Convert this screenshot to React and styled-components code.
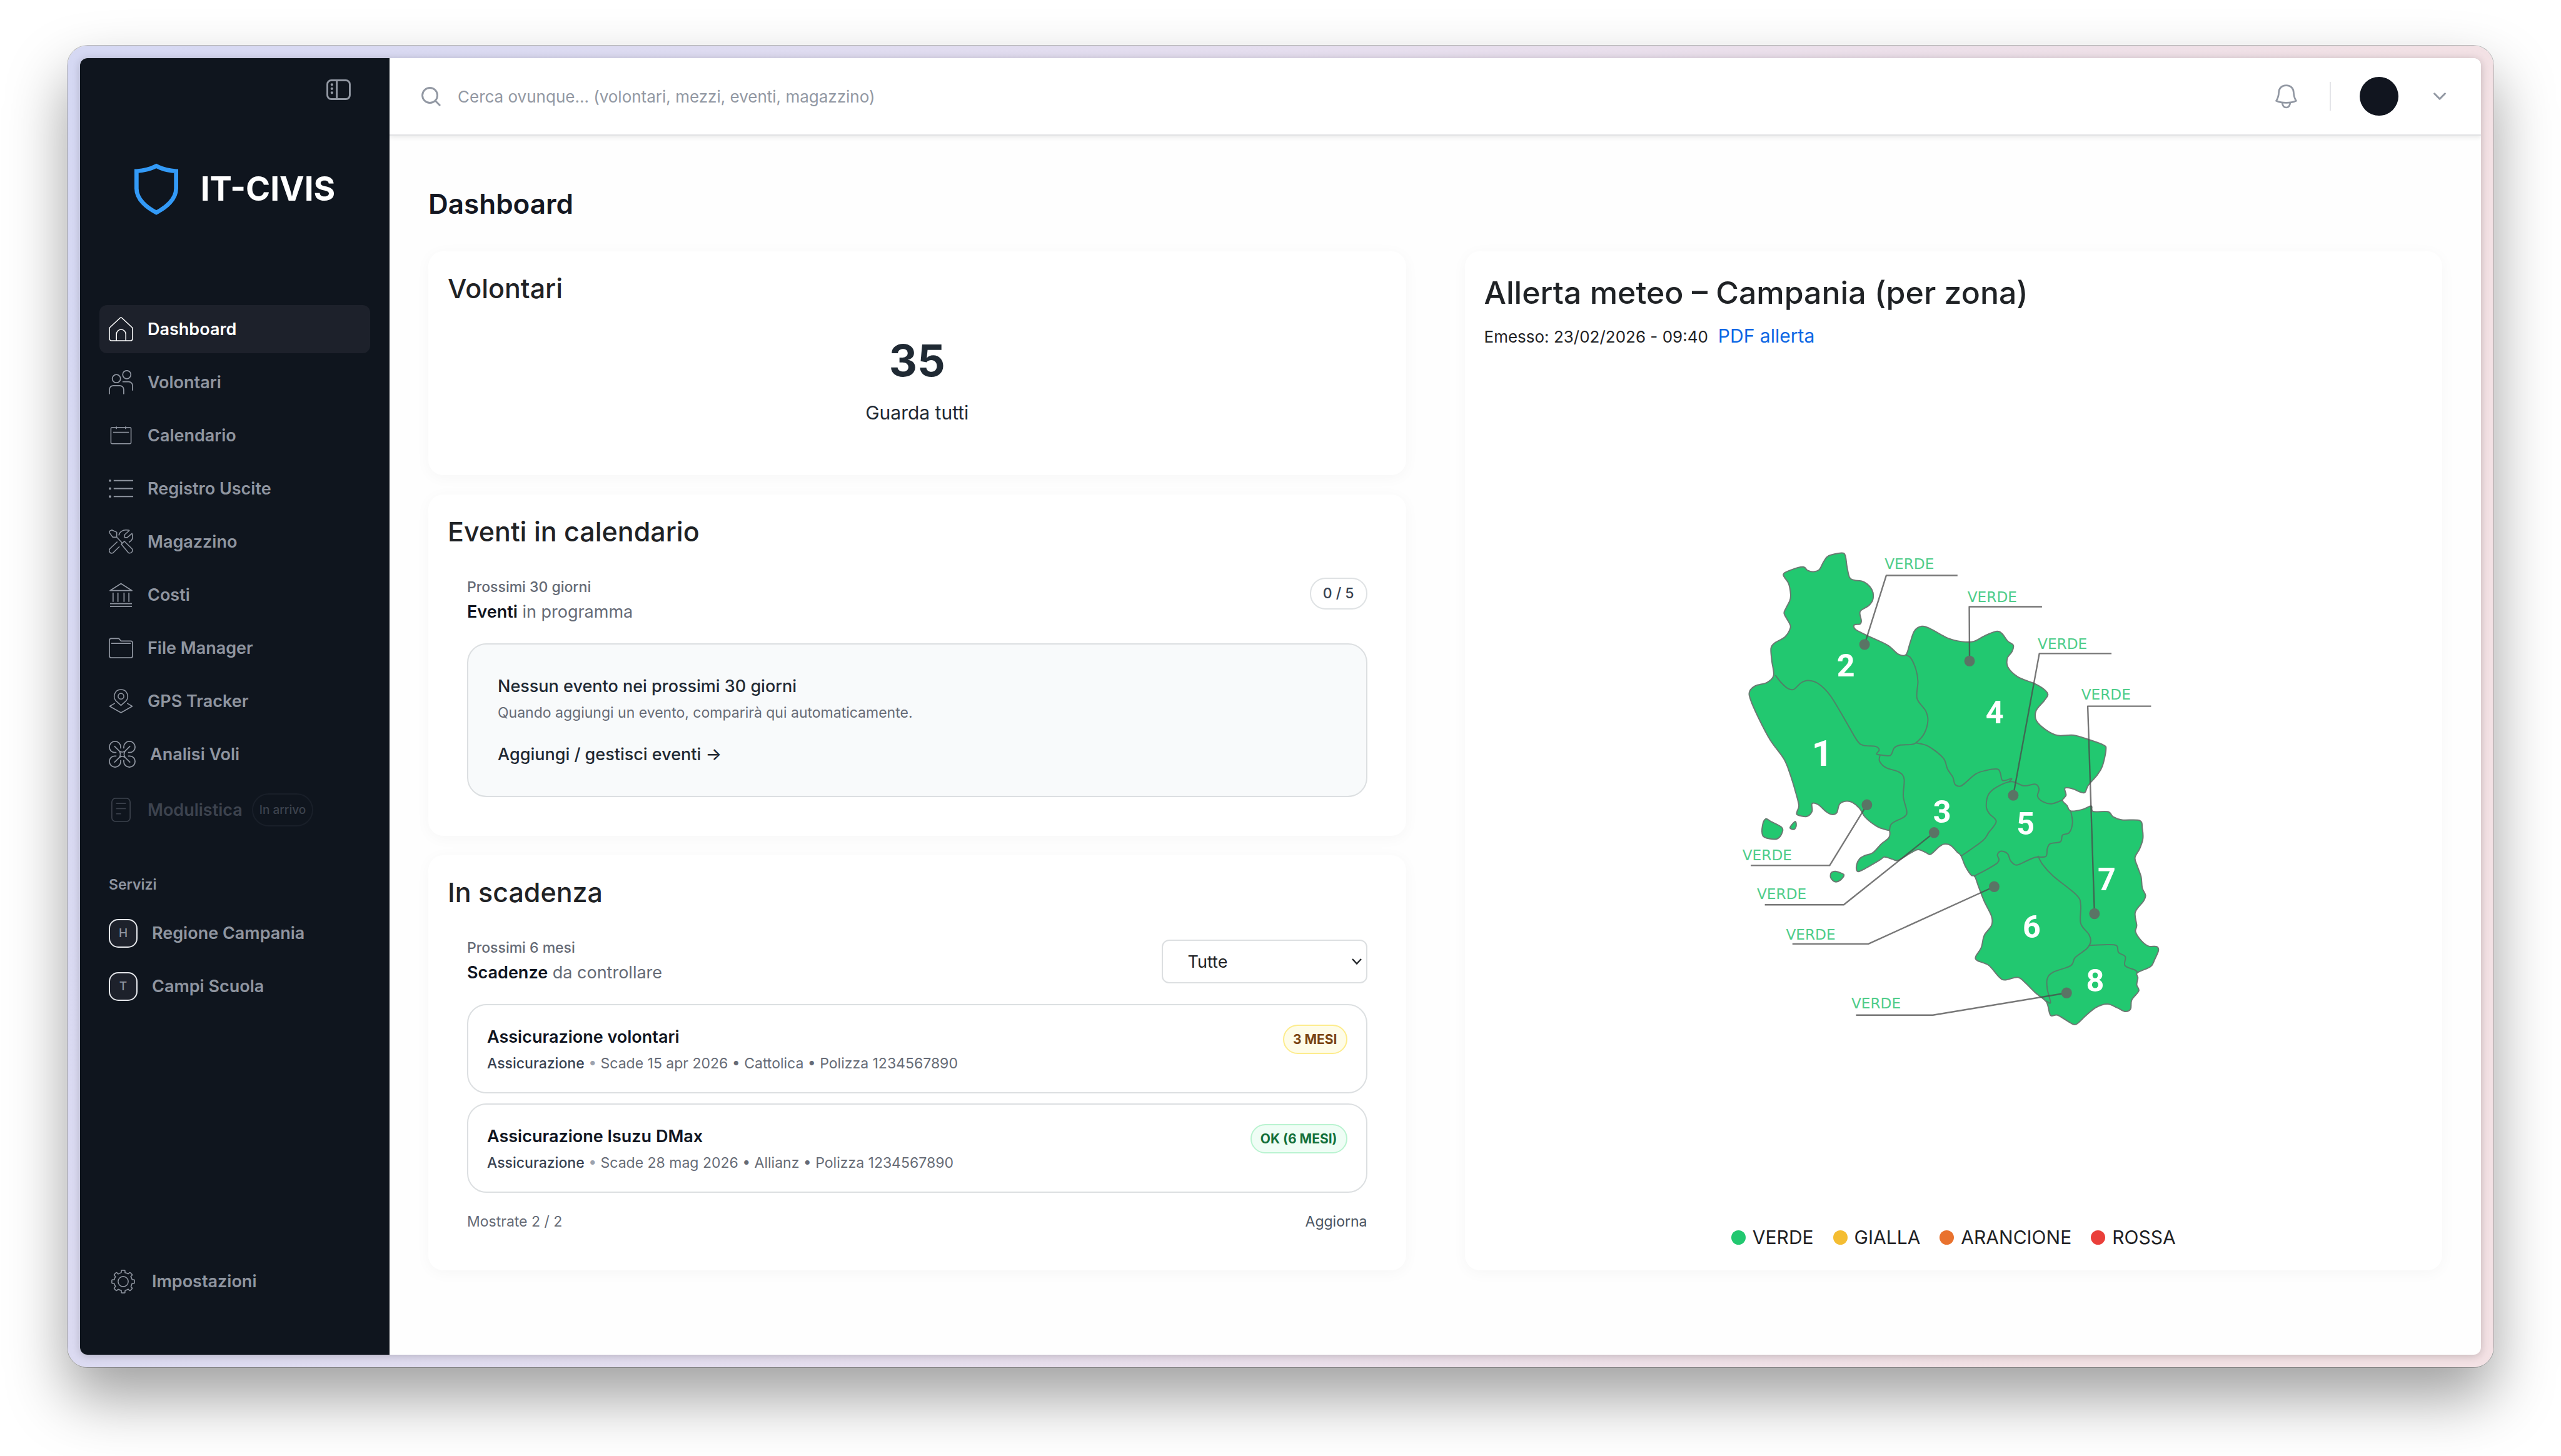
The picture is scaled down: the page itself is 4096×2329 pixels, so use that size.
import { useState } from "react";
import styled, { createGlobalStyle } from "styled-components";

const voci = [
    { nome: "Dashboard", Icona: IconaCasa },
    { nome: "Volontari", Icona: IconaPersone },
    { nome: "Calendario", Icona: IconaCalendario },
    { nome: "Registro Uscite", Icona: IconaLista },
    { nome: "Magazzino", Icona: IconaAttrezzi },
    { nome: "Costi", Icona: IconaBanca },
    { nome: "File Manager", Icona: IconaCartella },
    { nome: "GPS Tracker", Icona: IconaMappa },
    { nome: "Analisi Voli", Icona: IconaDrone },
];

const servizi = [
    { sigla: "H", nome: "Regione Campania" },
    { sigla: "T", nome: "Campi Scuola" },
];

const scadenze = [
    { titolo: "Assicurazione volontari", dettagli: "Scade 15 apr 2026 • Cattolica • Polizza 1234567890", stato: "3 MESI", tono: "giallo" },
    { titolo: "Assicurazione Isuzu DMax", dettagli: "Scade 28 mag 2026 • Allianz • Polizza 1234567890", stato: "OK (6 MESI)", tono: "verde" },
];

const livelli = [
    { nome: "VERDE", colore: "#22c870" },
    { nome: "GIALLA", colore: "#f4bd32" },
    { nome: "ARANCIONE", colore: "#e9722e" },
    { nome: "ROSSA", colore: "#ea3f3a" },
];

const toni = {
    giallo: { sfondo: "#fefce8", bordo: "#fdec8c", testo: "#7a4412" },
    verde: { sfondo: "#effdf5", bordo: "#b9f3d0", testo: "#15703a" },
};

export default function App() {
    const [attiva, setAttiva] = useState("Dashboard");
    return (
        <>
            <GlobalStyle />
            <Sfondo>
                <Cornice>
                    <Finestra>
                        <Sidebar attiva={attiva} setAttiva={setAttiva} />
                        <Pagina>
                            <Header />
                            <Dashboard />
                        </Pagina>
                    </Finestra>
                </Cornice>
            </Sfondo>
        </>
    )
}

function Sidebar(props) {
    const { attiva, setAttiva } = props
    return (
        <SidebarContainer>
            <BottoneMenu aria-label="Riduci menu"><IconaMenu /></BottoneMenu>
            <Logo>
                <IconaScudo />
                <span>IT-CIVIS</span>
            </Logo>
            <Menu>
                {voci.map(({ nome, Icona }) => (
                    <Voce key={nome} href="#" $attiva={attiva === nome} onClick={() => setAttiva(nome)}>
                        <Icona />
                        <span>{nome}</span>
                    </Voce>
                ))}
                <VoceSpenta aria-disabled="true">
                    <IconaModulo />
                    <span>Modulistica</span>
                    <InArrivo>In arrivo</InArrivo>
                </VoceSpenta>
            </Menu>
            <TitoloServizi>Servizi</TitoloServizi>
            <Menu>
                {servizi.map(({ sigla, nome }) => (
                    <Voce key={nome} href="#">
                        <Sigla>{sigla}</Sigla>
                        <span>{nome}</span>
                    </Voce>
                ))}
            </Menu>
            <Fondo>
                <Voce href="#">
                    <IconaIngranaggio />
                    <span>Impostazioni</span>
                </Voce>
            </Fondo>
        </SidebarContainer>
    )
}

function Header() {
    const [ricerca, setRicerca] = useState("");
    return (
        <HeaderContainer>
            <Ricerca>
                <svg width="31" height="31" viewBox="0 0 32 32" fill="none" stroke="#9298a3" strokeWidth="3" aria-hidden="true">
                    <circle cx="14" cy="14" r="12.4" />
                    <path d="M23 23l8 8" />
                </svg>
                <InputRicerca type="text" aria-label="Cerca" placeholder="Cerca ovunque… (volontari, mezzi, eventi, magazzino)"
                    value={ricerca} onChange={e => setRicerca(e.target.value)} />
            </Ricerca>
            <BottoneIcona aria-label="Notifiche">
                <svg width="35" height="39" viewBox="0 0 36 40" fill="none" stroke="#9298a3" strokeWidth="2.8" strokeLinejoin="round" aria-hidden="true">
                    <path d="M18 1.6C10 1.6 6 7 5.8 13c-.2 6-1 9-4.2 14 5 2.4 10.6 3.2 16.4 3.2S29.4 29.4 34.4 27c-3.2-5-4-8-4.200-14C30 7 26 1.600 18 1.600z" />
                    <path d="M11.500 30.500c.5 4.500 3 7.500 6.500 7.500s6-3 6.500-7.500" />
                </svg>
            </BottoneIcona>
            <Divisore />
            <Profilo aria-label="Profilo">
                <Avatar />
                <svg width="20" height="12" viewBox="0 0 20 12" fill="none" stroke="#9298a3" strokeWidth="3" strokeLinecap="round" strokeLinejoin="round" aria-hidden="true">
                    <path d="M1.600 1.800L10 10.200l8.400-8.400" />
                </svg>
            </Profilo>
        </HeaderContainer>
    )
}

function Dashboard() {
    return (
        <Contenuto>
            <TitoloPagina>Dashboard</TitoloPagina>
            <Griglia>
                <Colonna>
                    <CartaVolontari />
                    <CartaEventi />
                    <CartaScadenze />
                </Colonna>
                <CartaAllerta />
            </Griglia>
        </Contenuto>
    )
}

function CartaVolontari() {
    return (
        <Carta>
            <TitoloCarta>Volontari</TitoloCarta>
            <Riepilogo>
                <Numero>35</Numero>
                <LinkTutti href="#">Guarda tutti</LinkTutti>
            </Riepilogo>
        </Carta>
    )
}

function CartaEventi() {
    return (
        <Carta>
            <TitoloCarta>Eventi in calendario</TitoloCarta>
            <Corpo>
                <Testata>
                    <Intro>
                        <Periodo>Prossimi 30 giorni</Periodo>
                        <Sottotitolo><b>Eventi</b> in programma</Sottotitolo>
                    </Intro>
                    <Contatore>0 / 5</Contatore>
                </Testata>
                <Vuoto>
                    <strong>Nessun evento nei prossimi 30 giorni</strong>
                    <Piccolo>Quando aggiungi un evento, comparirà qui automaticamente.</Piccolo>
                    <LinkEventi href="#">Aggiungi / gestisci eventi →</LinkEventi>
                </Vuoto>
            </Corpo>
        </Carta>
    )
}

function CartaScadenze() {
    const [filtro, setFiltro] = useState("Tutte");
    return (
        <Carta>
            <TitoloCarta>In scadenza</TitoloCarta>
            <Corpo>
                <Testata $centrata>
                    <Intro>
                        <Periodo>Prossimi 6 mesi</Periodo>
                        <Sottotitolo><b>Scadenze</b> da controllare</Sottotitolo>
                    </Intro>
                    <Filtro>
                        <select aria-label="Filtro scadenze" value={filtro} onChange={e => setFiltro(e.target.value)}>
                            <option>Tutte</option>
                            <option>Assicurazione</option>
                            <option>Revisione</option>
                        </select>
                        <svg width="16" height="10" viewBox="0 0 16 10" fill="none" stroke="#222529" strokeWidth="2.4" aria-hidden="true">
                            <path d="M1 1l7 7.500L15 1" />
                        </svg>
                    </Filtro>
                </Testata>
                <Elenco>
                    {scadenze.map(s => (
                        <Scadenza key={s.titolo}>
                            <div>
                                <h3>{s.titolo}</h3>
                                <Piccolo><b>Assicurazione</b> <i>•</i> {s.dettagli}</Piccolo>
                            </div>
                            <Stato $tono={toni[s.tono]}>{s.stato}</Stato>
                        </Scadenza>
                    ))}
                </Elenco>
                <Piede>
                    <Piccolo>Mostrate 2 / 2</Piccolo>
                    <Aggiorna>Aggiorna</Aggiorna>
                </Piede>
            </Corpo>
        </Carta>
    )
}

function CartaAllerta() {
    return (
        <Carta>
            <TitoloAllerta>Allerta meteo – Campania (per zona)</TitoloAllerta>
            <Emissione>
                <span>Emesso: 23/02/2026 - 09:40</span>
                <a href="#">PDF allerta</a>
            </Emissione>
            <AreaMappa>
                <Mappa />
            </AreaMappa>
            <Legenda>
                {livelli.map(({ nome, colore }) => (
                    <li key={nome}><Pallino $colore={colore} />{nome}</li>
                ))}
            </Legenda>
        </Carta>
    )
}

/* ---------- mappa ---------- */

const costa = "220,210 245,188 287,172 303,190 323,196 343,185 358,145 375,117 418,103 431,115 437,170 446,225 462,238 495,247 522,285 526,330 513,362 485,388 481,405 486,440 481,456 462,460 466,482 505,512 575,560 612,605 638,608 652,550 667,490 692,467 720,478 780,525 830,543 870,542 905,515 945,492 965,502 985,540 1004,560 1000,592 984,625 986,670 1020,718 1075,750 1108,778 1122,805 1110,835 1082,885 1083,935 1115,980 1155,1008 1210,1007 1260,1028 1312,1056 1320,1080 1308,1160 1290,1205 1260,1255 1249,1290 1235,1290 1205,1272 1180,1270 1184,1305 1172,1330 1187,1355 1200,1383 1240,1375 1270,1358 1276,1385 1327,1386 1345,1412 1375,1427 1435,1430 1444,1470 1446,1520 1435,1570 1419,1615 1428,1660 1440,1710 1444,1765 1455,1800 1448,1830 1420,1885 1425,1950 1421,1982 1440,2025 1465,2053 1493,2055 1499,2075 1486,2120 1472,2155 1427,2185 1429,2210 1425,2245 1432,2275 1408,2320 1404,2365 1385,2377 1360,2360 1325,2340 1285,2358 1250,2400 1218,2441 1195,2430 1155,2395 1131,2396 1117,2330 1080,2285 1045,2235 1020,2208 975,2221 955,2205 920,2148 882,2125 876,2105 895,2060 905,2000 930,1950 930,1905 905,1830 885,1755 873,1708 860,1700 840,1655 826,1605 812,1585 790,1553 768,1547 750,1562 722,1598 705,1588 680,1574 655,1590 612,1627 592,1622 565,1611 550,1625 490,1675 472,1681 470,1650 480,1620 497,1604 525,1590 555,1545 580,1515 582,1480 573,1477 540,1460 500,1415 480,1370 455,1340 435,1334 412,1348 402,1392 385,1400 365,1385 340,1352 318,1346 318,1385 300,1410 268,1402 267,1385 273,1355 262,1290 243,1200 222,1125 175,1030 135,920 108,830 105,790 125,762 165,745 187,710 181,640 178,575 192,548 225,520 244,475 240,450 223,405 228,380 242,340 245,310 238,255";

const isole = [
    "160,1422 178,1435 214,1463 216,1490 200,1520 175,1521 150,1505 149,1455",
    "260,1435 264,1455 257,1474 243,1465",
    "397,1682 412,1688 427,1700 415,1725 397,1734 382,1715 383,1690",
];

const confini = [
    "193,710 212,745 235,775 255,780 280,748 305,736 340,752 380,810 430,930 470,1030 492,1057 535,1063 547,1080 538,1100 555,1105 585,1107 598,1070 615,1057 655,1053 672,1045 700,1000 713,935 705,885 676,825 679,740 672,680 655,625 638,608",
    "550,1105 548,1135 570,1168 615,1190 632,1225 629,1310 641,1385 632,1412 590,1445 582,1480",
    "672,1045 715,1062 765,1120 780,1175 798,1215 805,1250 820,1260 835,1250 875,1200 910,1182 950,1175 960,1195 968,1232 998,1222 990,1238",
    "1172,1328 1135,1347 1105,1337 1087,1310 1092,1275 1080,1250 1040,1258 998,1237 950,1262 920,1300 912,1360 922,1395 946,1435 920,1490 900,1530 826,1607",
    "1200,1383 1206,1440 1195,1490 1172,1502 1165,1535 1130,1545 1120,1570 1115,1608 1080,1612 1050,1630 1015,1651 995,1630 985,1595 963,1582 950,1600 950,1640 870,1707",
    "1088,1605 1105,1650 1140,1705 1220,1800 1234,1850 1234,1940 1262,1995 1268,2030 1255,2065 1215,2110 1200,2150 1140,2182 1120,2215 1120,2265 1131,2333 1117,2325",
    "1263,2049 1310,2046 1355,2049 1363,2085 1386,2105 1385,2150 1420,2172 1427,2185",
];

const richiami = [
    { punto: [497, 557], gomito: [571, 215], fine: 814, x: 274, y: 61 },
    { punto: [855, 639], gomito: [854, 370], fine: 1102, x: 411, y: 116 },
    { punto: [1004, 1305], gomito: [1093, 602], fine: 1339, x: 527, y: 193 },
    { punto: [1281, 1892], gomito: [1258, 863], fine: 1474, x: 599, y: 277 },
    { punto: [505, 1352], gomito: [378, 1653], fine: 109, x: 39, y: 542 },
    { punto: [734, 1490], gomito: [426, 1848], fine: 157, x: 63, y: 606 },
    { punto: [939, 1758], gomito: [510, 2042], fine: 251, x: 111, y: 674 },
    { punto: [1186, 2285], gomito: [730, 2395], fine: 468, x: 219, y: 787 },
];

const zone = [
    { n: 1, x: 171, y: 386, corpo: 60 },
    { n: 2, x: 210, y: 238, corpo: 52 },
    { n: 3, x: 369, y: 480, corpo: 52 },
    { n: 4, x: 456, y: 316, corpo: 52 },
    { n: 5, x: 507, y: 500, corpo: 52 },
    { n: 6, x: 517, y: 670, corpo: 52 },
    { n: 7, x: 641, y: 592, corpo: 52 },
    { n: 8, x: 622, y: 759, corpo: 52 },
];

// curva morbida che passa per tutti i punti (Catmull-Rom)
function curva(testo, chiusa) {
    const p = testo.split(" ").map(c => c.split(",").map(Number));
    const n = p.length;
    const prendi = i => chiusa ? p[(i + n) % n] : p[Math.max(0, Math.min(n - 1, i))];
    let d = `M${p[0][0]} ${p[0][1]}`;
    for (let i = 0; i < (chiusa ? n : n - 1); i++) {
        const [a, b, c, e] = [prendi(i - 1), prendi(i), prendi(i + 1), prendi(i + 2)];
        d += `C${b[0] + (c[0] - a[0]) / 6} ${b[1] + (c[1] - a[1]) / 6} ${c[0] - (e[0] - b[0]) / 6} ${c[1] - (e[1] - b[1]) / 6} ${c[0]} ${c[1]}`;
    }
    return chiusa ? d + "Z" : d;
}

function Mappa() {
    return (
        <svg width="750" height="794" viewBox="0 0 775 820" role="img" aria-label="Zone di allerta della Campania">
            <g transform="scale(.4847 .3333)" stroke="#6a7a72" strokeWidth="2" strokeLinejoin="round">
                <path d={curva(costa, true)} fill="#22c870" vectorEffect="non-scaling-stroke" />
                {isole.map(i => <path key={i} d={curva(i, true)} fill="#22c870" vectorEffect="non-scaling-stroke" />)}
                {confini.map(c => <path key={c} d={curva(c, false)} fill="none" stroke="#4f8268" vectorEffect="non-scaling-stroke" />)}
                {richiami.map(({ punto, gomito, fine }) => (
                    <g key={fine}>
                        <path d={`M${punto} L${gomito} H${fine}`} fill="none" stroke="#4a4a4a" strokeOpacity=".75" strokeWidth="2.4" vectorEffect="non-scaling-stroke" />
                        <ellipse cx={punto[0]} cy={punto[1]} rx="18" ry="27" fill="#5a7465" stroke="none" />
                    </g>
                ))}
            </g>
            {richiami.map(({ x, y }) => <Etichetta key={y} x={x} y={y}>VERDE</Etichetta>)}
            {zone.map(({ n, x, y, corpo }) => <NumeroZona key={n} x={x} y={y} fontSize={corpo}>{n}</NumeroZona>)}
        </svg>
    )
}

/* ---------- icone ---------- */

function Tratto({ lato = 39, box = 40, spessore = 1.6, children }) {
    return (
        <svg width={lato} height={lato} viewBox={`0 0 ${box} ${box}`} fill="none" stroke="currentColor" strokeWidth={spessore} strokeLinejoin="round" aria-hidden="true">
            {children}
        </svg>
    )
}

function IconaCasa() {
    return (
        <Tratto>
            <path d="M1 35V18L18.300 1.800q1.700-1.500 3.400 0L39 18v17q0 4-4 4H5q-4 0-4-4z" />
            <path d="M12.500 39V28.500a7.700 8 0 0 1 15.400 0V39" />
        </Tratto>
    )
}

function IconaPersone() {
    return (
        <Tratto spessore={1.8}>
            <circle cx="29.500" cy="7.500" r="6.700" />
            <circle cx="12.500" cy="14" r="6.700" />
            <path d="M1 39.500V32a6.500 6.500 0 0 1 6.500-6.500h10.500a6.500 6.500 0 0 1 6.500 6.500v7.500M22.500 19h10a6.500 6.500 0 0 1 6.500 6.500v8" />
        </Tratto>
    )
}

function IconaCalendario() {
    return (
        <Tratto>
            <rect x="3.500" y="7" width="33" height="26.500" rx="2" />
            <path d="M7 14.800h26M12.500 5.500v4M27.500 5.500v4" />
        </Tratto>
    )
}

function IconaLista() {
    return (
        <Tratto spessore={2}>
            <path d="M8 7h32M8 20h32M8 33h32" />
            <g fill="currentColor" stroke="none">
                <circle cx="2" cy="7" r="2" />
                <circle cx="2" cy="20" r="2" />
                <circle cx="2" cy="33" r="2" />
            </g>
        </Tratto>
    )
}

function IconaAttrezzi() {
    return (
        <Tratto>
            <path d="M1.500 2.500L5 .8 13 4.500v8H6.500L.8 5zM13 12.500l9 9.500" />
            <path d="M20.500 24.200L25.500 19.200 38 31.500c3 4-2 9-6 6.500z" />
            <path d="M16.500 9.500C17.500 3.500 23 .8 28 .8c3 0 6 .2 5.500 1L26 8.500v4.500h4.500L38 6.500c2 5 1.500 11-5 14.500" />
            <path d="M14 20L1.800 31.500c-3 4 1 9.500 5.500 6.500L17.500 28" />
        </Tratto>
    )
}

function IconaBanca() {
    return (
        <Tratto spessore={1.8}>
            <path d="M20 1.500L2 13h36zM7 16.500v15M15 16.500v15M25 16.500v15M33 16.500v15M2 34.500h36M2 39h36" />
        </Tratto>
    )
}

function IconaCartella() {
    return (
        <Tratto spessore={1.8}>
            <path d="M4 4.500h12.500l3.500 4h16q3 0 3 3V33q0 3-3 3H4q-3 0-3-3V7.500q0-3 3-3zM4 12.500h32" />
        </Tratto>
    )
}

function IconaMappa() {
    return (
        <Tratto>
            <path d="M20 27l-8.200-7.300C6 13 9.500 1 20 1s14 12 8.200 18.700z" />
            <circle cx="20" cy="12" r="4.700" />
            <path d="M10 23.500L1.500 28.500 20 39l18.500-10.500-8.500-5" />
        </Tratto>
    )
}

function IconaDrone() {
    const braccio = "M19.500 12.500V10A9 9 0 0 0 10.500 1H10A9 9 0 0 0 1 10v.5A8.500 8.500 0 0 0 9.500 19H12.500M9 8.500L17 16.500q2.500 2 5 2M17 16.500q2 3 2 5.500";
    return (
        <Tratto lato={43} box={44} spessore={1.8}>
            <path d={braccio} />
            <path d={braccio} transform="translate(44 0) scale(-1 1)" />
            <path d={braccio} transform="translate(0 44) scale(1 -1)" />
            <path d={braccio} transform="translate(44 44) scale(-1 -1)" />
        </Tratto>
    )
}

function IconaModulo() {
    return (
        <Tratto>
            <rect x="5" y="1" width="30" height="38" rx="6" />
            <path d="M12 9.500h16M12 18h16M12 26.500h8" />
        </Tratto>
    )
}

function IconaIngranaggio() {
    const dente = "M17 5.500V2.500q0-1 1-1h4q1 0 1 1v3q3 .6 5.200 2";
    return (
        <Tratto lato={46} box={47}>
            <g transform="translate(3.500 3.500)">
                {[0, 45, 90, 135, 180, 225, 270, 315].map(a => <path key={a} d={dente} transform={`rotate(${a} 20 20)`} />)}
                <circle cx="20" cy="20" r="8.300" />
            </g>
        </Tratto>
    )
}

function IconaMenu() {
    return (
        <svg width="39" height="33" viewBox="0 0 40 34" fill="none" stroke="#9298a3" strokeWidth="3" aria-hidden="true">
            <rect x="1.500" y="1.500" width="37" height="31" rx="6.500" />
            <path d="M17 2v30" />
            <path d="M9 8.600h.1M9 15.300h.1M9 22h.1" strokeWidth="4.400" strokeLinecap="round" />
        </svg>
    )
}

function IconaScudo() {
    return (
        <svg width="70" height="83" viewBox="0 0 73 86" fill="none" stroke="#339af7" strokeWidth="7" aria-hidden="true">
            <path d="M36.500 4.500Q22 12 3.500 13v29c0 18 17 32 33 40 16-8 33-22 33-40V13Q51 12 36.500 4.500z" />
        </svg>
    )
}

/* ---------- stili ---------- */

const GlobalStyle = createGlobalStyle`
* {
    box-sizing: border-box;
}
body {
    margin: 0;
    background: #ffffff;
    color: #1f2225;
    font-family: 'Inter', 'Liberation Sans', sans-serif;
    font-size: 27px;
    line-height: 39px;
}
h1, h2, h3, p, ul {
    margin: 0;
    padding: 0;
}
a {
    color: inherit;
    text-decoration: none;
}
button, input, select {
    font: inherit;
    color: inherit;
    background: none;
    border: none;
    padding: 0;
}
svg {
    display: block;
    flex: none;
}
`
const Sfondo = styled.div`
display: flex;
min-height: 100vh;
padding: 73px 108px 143px;
`
const Cornice = styled.div`
flex: 1;
display: flex;
padding: 20px;
border-radius: 32px;
background: linear-gradient(110deg, #d5d8f3, #e6deee 45%, #f3e1e4 85%);
box-shadow: 0 0 0 1px rgba(0, 0, 0, 0.25), 0 48px 96px rgba(0, 0, 0, 0.38);
`
const Finestra = styled.div`
flex: 1;
display: flex;
border-radius: 12px;
overflow: hidden;
background: #fefefe;
box-shadow: 0 2px 14px rgba(0, 0, 0, 0.2);
`
const SidebarContainer = styled.aside`
width: 495px;
flex: none;
display: flex;
flex-direction: column;
padding: 34px 31px 79px;
background: #0f151e;
color: #8f95a0;
`
const BottoneMenu = styled.button`
align-self: flex-end;
margin-right: 31px;
`
const Logo = styled.div`
display: flex;
align-items: center;
justify-content: center;
gap: 36px;
margin: 101px 0 144px;
color: #ffffff;
font-size: 53px;
line-height: 83px;
font-weight: 700;
`
const Menu = styled.nav`
display: flex;
flex-direction: column;
gap: 8px;
`
const Voce = styled.a`
display: flex;
align-items: center;
gap: 23px;
min-height: 77px;
padding: 0 15px;
border-radius: 12px;
font-weight: 600;
color: ${props => props.$attiva ? "#ffffff" : "inherit"};
background: ${props => props.$attiva ? "#1d212b" : "none"};
`
const VoceSpenta = styled(Voce).attrs({ as: "div" })`
min-height: 85px;
color: #3d434e;
`
const InArrivo = styled.span`
margin-left: -8px;
padding: 5px 10px;
border: 2px solid #191f29;
border-radius: 27px;
font-size: 19px;
font-weight: 500;
`
const TitoloServizi = styled.h2`
margin: 62px 15px 23px;
font-size: 23px;
line-height: 31px;
font-weight: 600;
`
const Sigla = styled.span`
width: 46px;
height: 46px;
display: grid;
place-items: center;
border: 2px solid #e5e7eb;
border-radius: 15px;
background: #1d212b;
font-size: 19px;
font-weight: 500;
`
const Fondo = styled.div`
margin-top: auto;
`
const Pagina = styled.div`
flex: 1;
min-width: 0;
display: flex;
flex-direction: column;
`
const HeaderContainer = styled.header`
height: 124px;
display: flex;
align-items: center;
padding: 0 56px 0 51px;
background: #ffffff;
border-bottom: 2px solid #e1e2e4;
box-shadow: 0 3px 7px rgba(0, 0, 0, 0.08);
`
const Ricerca = styled.label`
flex: 1;
display: flex;
align-items: center;
gap: 27px;
`
const InputRicerca = styled.input`
flex: 1;
outline: none;
font-size: 26px;
&::placeholder {
    color: #9298a3;
    opacity: 1;
}
`
const BottoneIcona = styled.button`
display: flex;
`
const Divisore = styled.div`
width: 2px;
height: 46px;
margin: 0 46px 0 52px;
background: #e4e5e8;
`
const Profilo = styled.button`
display: flex;
align-items: center;
gap: 56px;
`
const Avatar = styled.span`
width: 62px;
height: 62px;
border-radius: 50%;
background: #11151f;
`
const Contenuto = styled.main`
flex: 1;
padding: 78px 62px 135px;
display: flex;
flex-direction: column;
`
const TitoloPagina = styled.h1`
margin-bottom: 45px;
color: #141722;
font-size: 44px;
line-height: 62px;
font-weight: 600;
`
const Griglia = styled.div`
flex: 1;
display: grid;
grid-template-columns: 1fr 1fr;
gap: 94px;
`
const Colonna = styled.div`
display: flex;
flex-direction: column;
gap: 31px;
`
const Carta = styled.section`
display: flex;
flex-direction: column;
padding: 31px;
border-radius: 24px;
background: #ffffff;
box-shadow: 0 4px 24px rgba(0, 0, 0, 0.035);
`
const TitoloCarta = styled.h2`
margin-bottom: 15px;
font-size: 43px;
line-height: 56px;
font-weight: 500;
`
const Riepilogo = styled.div`
display: flex;
flex-direction: column;
align-items: center;
gap: 17px;
padding: 29px 0 46px;
color: #1f2933;
`
const Numero = styled.strong`
font-size: 70px;
line-height: 87px;
font-weight: 700;
`
const LinkTutti = styled.a`
font-size: 30px;
line-height: 46px;
`
const Corpo = styled.div`
display: flex;
flex-direction: column;
gap: 31px;
padding: 31px;
`
const Testata = styled.div`
display: flex;
align-items: ${props => props.$centrata ? "center" : "flex-start"};
justify-content: space-between;
`
const Intro = styled.div`
display: flex;
flex-direction: column;
gap: 4px;
`
const Piccolo = styled.p`
color: #666b76;
font-size: 23px;
line-height: 31px;
b {
    color: #374151;
    font-weight: 500;
}
i {
    color: #9ca3af;
    font-style: normal;
}
`
const Periodo = styled(Piccolo)`
font-weight: 500;
`
const Sottotitolo = styled.p`
color: #666b76;
b {
    color: #11151f;
    font-weight: 600;
}
`
const Contatore = styled.span`
padding: 8px 19px;
border: 2px solid #dfe2e4;
border-radius: 25px;
color: #374151;
font-size: 23px;
line-height: 31px;
font-weight: 500;
`
const Vuoto = styled.div`
display: flex;
flex-direction: column;
align-items: flex-start;
gap: 8px;
padding: 47px;
border: 2px solid #dcdfe1;
border-radius: 31px;
background: #f8fafb;
strong {
    color: #1f2933;
    font-weight: 500;
}
`
const LinkEventi = styled.a`
margin-top: 23px;
color: #1f2933;
font-weight: 500;
`
const Filtro = styled.div`
display: grid;
align-items: center;
select {
    grid-area: 1 / 1;
    width: 329px;
    height: 70px;
    padding: 0 40px;
    appearance: none;
    border: 2px solid #dcdfe1;
    border-radius: 12px;
    background: #ffffff;
}
svg {
    grid-area: 1 / 1;
    justify-self: end;
    margin-right: 9px;
    pointer-events: none;
}
`
const Elenco = styled.ul`
display: flex;
flex-direction: column;
gap: 16px;
list-style: none;
`
const Scadenza = styled.li`
display: flex;
align-items: flex-start;
justify-content: space-between;
padding: 31px 30px 30px;
border: 2px solid #dcdfe1;
border-radius: 31px;
h3 {
    margin-bottom: 8px;
    color: #11151f;
    font-size: 27px;
    font-weight: 600;
}
`
const Stato = styled.span`
padding: 6px 14px;
border: 2px solid ${props => props.$tono.bordo};
border-radius: 24px;
background: ${props => props.$tono.sfondo};
color: ${props => props.$tono.testo};
font-size: 21px;
line-height: 31px;
font-weight: 700;
`
const Piede = styled.div`
display: flex;
justify-content: space-between;
`
const Aggiorna = styled.button`
color: #4b5563;
font-size: 23px;
line-height: 31px;
`
const TitoloAllerta = styled.h2`
font-size: 50px;
line-height: 70px;
font-weight: 500;
`
const Emissione = styled.p`
display: flex;
align-items: baseline;
gap: 16px;
margin-top: 15px;
font-size: 26px;
a {
    color: #0b66e4;
    font-size: 30px;
}
`
const AreaMappa = styled.div`
flex: 1;
display: grid;
place-items: center;
padding-bottom: 20px;
`
const Legenda = styled.ul`
display: flex;
justify-content: center;
gap: 31px;
list-style: none;
font-size: 30px;
line-height: 44px;
li {
    display: flex;
    align-items: center;
    gap: 11px;
}
`
const Pallino = styled.span`
width: 23px;
height: 23px;
border-radius: 50%;
background: ${props => props.$colore};
`
const Etichetta = styled.text`
fill: #4fcd8a;
font-family: 'DejaVu Sans', sans-serif;
font-size: 24px;
`
const NumeroZona = styled.text`
fill: #ffffff;
font-family: Roboto, sans-serif;
font-weight: 700;
text-anchor: middle;
`
